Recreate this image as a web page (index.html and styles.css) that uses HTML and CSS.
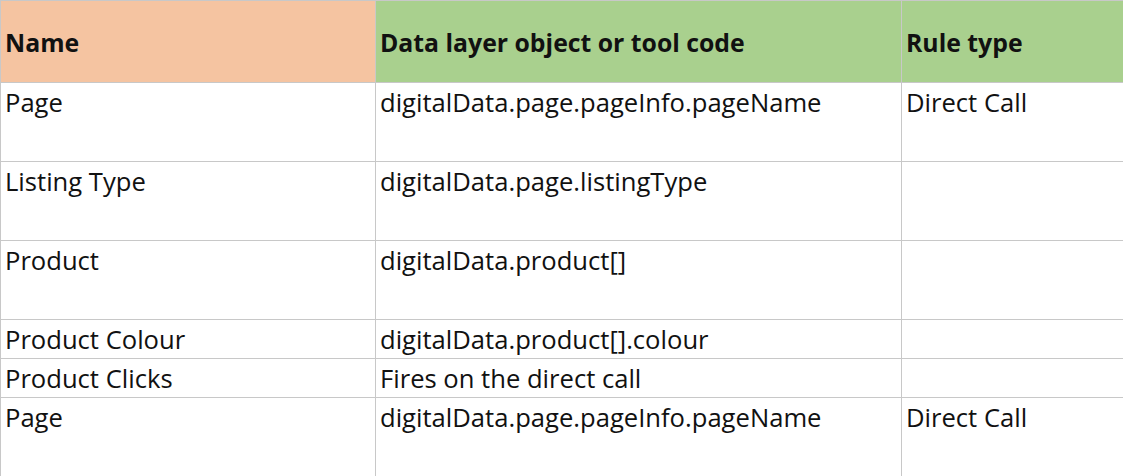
FILE: index.html
```html
<!DOCTYPE html>
<html lang="en">
<head>
<meta charset="utf-8">
<title>Data layer mapping</title>
<link rel="stylesheet" href="styles.css">
</head>
<body>
<table class="sheet">
  <colgroup>
    <col class="c-name">
    <col class="c-code">
    <col class="c-rule">
  </colgroup>
  <thead>
    <tr class="head">
      <th class="h-name">Name</th>
      <th class="h-green">Data layer object or tool code</th>
      <th class="h-green">Rule type</th>
    </tr>
  </thead>
  <tbody>
    <tr class="tall">
      <td>Page</td>
      <td>digitalData.page.pageInfo.pageName</td>
      <td>Direct Call</td>
    </tr>
    <tr class="tall">
      <td>Listing Type</td>
      <td>digitalData.page.listingType</td>
      <td></td>
    </tr>
    <tr class="tall">
      <td>Product</td>
      <td>digitalData.product[]</td>
      <td></td>
    </tr>
    <tr class="short">
      <td>Product Colour</td>
      <td>digitalData.product[].colour</td>
      <td></td>
    </tr>
    <tr class="short">
      <td>Product Clicks</td>
      <td>Fires on the direct call</td>
      <td></td>
    </tr>
    <tr class="tall">
      <td>Page</td>
      <td>digitalData.page.pageInfo.pageName</td>
      <td>Direct Call</td>
    </tr>
  </tbody>
</table>
</body>
</html>
```

FILE: styles.css
```css
html, body {
  margin: 0;
  padding: 0;
  background: #ffffff;
}

.sheet {
  border-collapse: collapse;
  table-layout: fixed;
  width: 1123px;
  font-family: "Open Sans", Lato, sans-serif;
  font-size: 25.6px;
  line-height: 32px;
  color: #111111;
}

.c-name { width: 375px; }
.c-code { width: 526px; }
.c-rule { width: 222px; }

.sheet th,
.sheet td {
  border: 1px solid #c8c8c8;
  padding: 0 4px;
  text-align: left;
  white-space: nowrap;
  overflow: hidden;
}

.sheet th {
  font-weight: 700;
  font-size: 24.8px;
  vertical-align: middle;
}

.sheet td {
  vertical-align: top;
  padding-top: 4px;
}

.head { height: 82px; }
.tall { height: 79px; }
.short { height: 39px; }

.h-name { background: #f5c4a1; }
.h-green { background: #a9d08e; }
```
